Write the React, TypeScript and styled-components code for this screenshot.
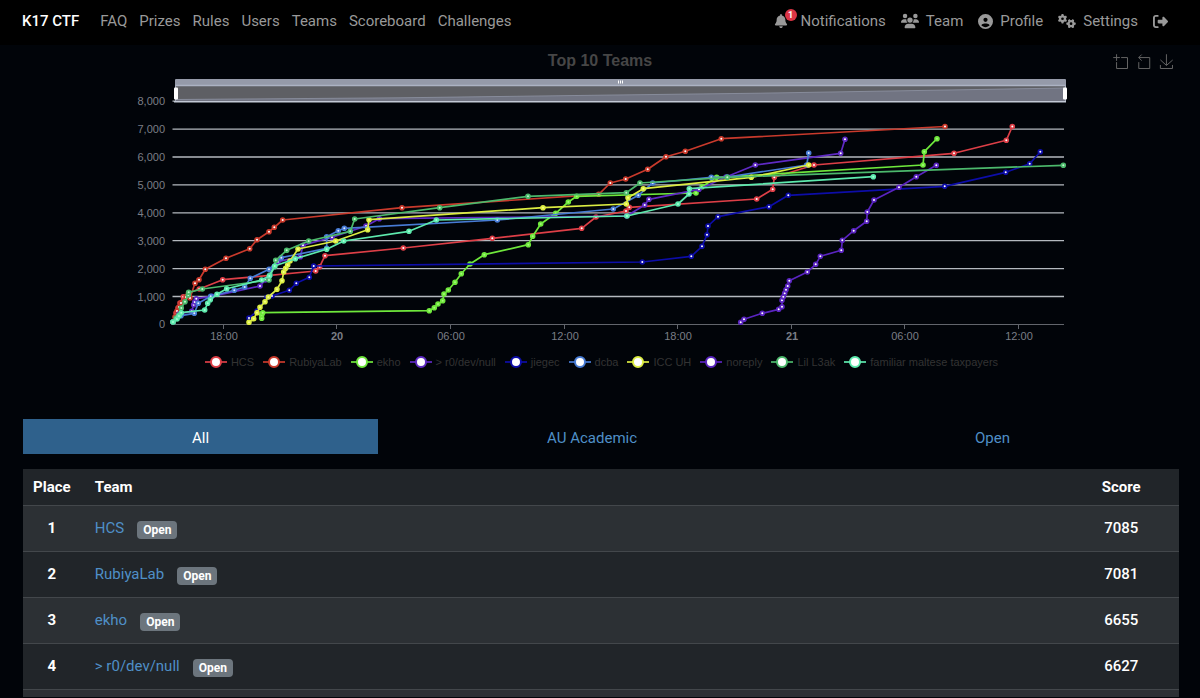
import React, { useState } from "react";
import styled, { createGlobalStyle } from "styled-components";
import { FaBell, FaCircleUser, FaGears, FaRightFromBracket, FaUsers } from "react-icons/fa6";

const GlobalStyle = createGlobalStyle`
  *, *::before, *::after { box-sizing: border-box; }
  html { scrollbar-width: none; background: #010409; }
  body {
    margin: 0;
    background: #010409;
    color: #fff;
    font-family: Roboto, "Liberation Sans", sans-serif;
    font-size: 15px;
    line-height: 20px;
  }
`;

const NavBar = styled.nav`
  display: flex;
  align-items: center;
  justify-content: space-between;
  height: 45px;
  padding: 0 32px 3px 22px;
  background: #000;
`;

const NavGroup = styled.div<{ $gap: number }>`
  display: flex;
  align-items: center;
  gap: ${(p) => p.$gap}px;
`;

const Brand = styled.a`
  margin-right: 9px;
  color: #fff;
  font-weight: 500;
  text-decoration: none;
`;

const NavLink = styled.a`
  display: flex;
  align-items: center;
  gap: 7px;
  color: #999;
  text-decoration: none;
`;

const BellWrap = styled.span`
  position: relative;
  display: flex;
  width: 20px;
`;

const BellCount = styled.span`
  position: absolute;
  top: -5px;
  right: -3px;
  width: 12px;
  height: 12px;
  border-radius: 6px;
  background: #dc3545;
  color: #fff;
  font-size: 9px;
  font-weight: 700;
  line-height: 12px;
  text-align: center;
`;

const ChartHeader = styled.header`
  display: grid;
  grid-template-columns: 1fr auto 1fr;
  align-items: center;
  height: 30px;
  padding: 2px 26px 0;
  font-family: "Liberation Sans", Arial, sans-serif;
`;

const ChartTitle = styled.h2`
  grid-column: 2;
  margin: 0;
  color: #464646;
  font-size: 16px;
  line-height: 20px;
`;

const Toolbox = styled.div`
  display: flex;
  justify-content: flex-end;
  gap: 8px;
`;

const ToolButton = styled.button`
  display: flex;
  padding: 0;
  border: 0;
  background: none;
  color: #666;
  cursor: pointer;
`;

const Plot = styled.svg`
  display: block;
  width: 100%;
  height: auto;
  font-family: "Liberation Sans", Arial, sans-serif;
  font-size: 11px;
`;

const Legend = styled.ul`
  display: flex;
  justify-content: center;
  gap: 9px;
  margin: 0;
  padding: 0 0 50px 3px;
  list-style: none;
  color: #333;
  font-family: "Liberation Sans", Arial, sans-serif;
  font-size: 11px;
  line-height: 14px;
`;

const LegendItem = styled.li`
  display: flex;
  align-items: center;
  gap: 4px;
  white-space: nowrap;
`;

const Board = styled.main`
  padding: 0 21px 0 23px;
`;

const Tabs = styled.div`
  display: flex;
  margin-bottom: 15px;
`;

const Tab = styled.button<{ $active: boolean }>`
  flex: 1 1 auto;
  height: 35px;
  padding: 2px 0 0;
  border: 0;
  background: ${(p) => (p.$active ? "#2f618c" : "transparent")};
  color: ${(p) => (p.$active ? "#fff" : "#4f8fc7")};
  font: inherit;
  cursor: pointer;
`;

const Table = styled.table`
  width: 100%;
  border-collapse: collapse;
  background: #212529;
`;

const HeadCell = styled.th<{ $team?: boolean; $width?: string }>`
  width: ${(p) => p.$width || "auto"};
  height: 36px;
  padding: ${(p) => (p.$team ? "0 0 0 14px" : "0")};
  border-bottom: 1px solid #43474b;
  font-weight: 700;
  text-align: ${(p) => (p.$team ? "left" : "center")};
`;

const Row = styled.tr`
  height: 46px;
  border-bottom: 1px solid #43474b;
  &:nth-child(odd) { background: #2c3034; }
`;

const EndRow = styled.tr`
  height: 8px;
  background: #2c3034;
`;

const Cell = styled.td<{ $team?: boolean; $strong?: boolean }>`
  padding: ${(p) => (p.$team ? "0 0 0 14px" : "0")};
  font-weight: ${(p) => (p.$strong ? 700 : 500)};
  text-align: center;
`;

const TeamEntry = styled.div`
  display: flex;
  align-items: center;
  gap: 13px;
`;

const TeamLink = styled.a`
  color: #4f8fc7;
  font-weight: 400;
  text-decoration: none;
`;

const Badge = styled.span`
  height: 18px;
  margin-top: 3px;
  padding: 0 6px;
  border-radius: 4px;
  background: #6c757d;
  font-size: 12px;
  font-weight: 700;
  line-height: 19px;
`;

type Series = { name: string; color: string; core: string; points: number[][] };

const parse = (text: string) => text.trim().split(/\s+/).map((p) => p.split(",").map(Number));

const series: Series[] = [
  { name: "HCS", color: "#dd3f47", core: "#fff", points: parse("173,322 176,313 178,308 180,303 183.3,296.7 188.5,293 199.3,289 222.7,279.7 315.7,271 319.7,266.7 325,255.7 403.3,248 492.3,238.3 581.7,228.3 596,217 626,211 629.3,207.3 756.7,199 772.7,189.3 774.3,177.3 814,165 954,153.3 1006.3,140.3 1012.3,126.5") },
  { name: "RubiyaLab", color: "#c93a2c", core: "#fff", points: parse("173,322 175,317 177,311 179,307 181,303 186,297 190,298 195,283.3 199,279.7 205.3,269.3 226,258.3 249.7,248.7 257,239.7 269,231.7 274.3,227.3 282.7,220 402,207.7 598.7,194.3 610.3,183 625.7,179 647.7,169.3 666,156.7 685.3,151.3 721.3,138.7 945,126.5") },
  { name: "ekho", color: "#6fe83c", core: "#a5f77b", points: parse("261.7,318.3 261.7,315 262.7,312.7 429.3,310.7 434.3,307.7 438,304 442.7,300.7 444,294 448.3,290 455,282.3 461.3,273.7 470,264 484.3,254.7 528.3,244.7 532.7,236.3 540.7,224 555.7,213.3 568.3,202 576.7,196.3 696,193 702,186.7 716.7,177.3 923,165 924.3,151.7 937,138.7") },
  { name: "> r0/dev/null", color: "#5f2ac4", core: "#fff", points: parse("173,322 179,314 191.7,311.3 193.7,304.7 194.7,302 196.3,298.7 212,296.3 260,286 265.3,280 270,275 274,267 278,261.7 300.3,256.7 303,245.3 332,237.3 366,226 379.3,218.7 626.7,216 644.7,205 649,199.3 699,189.3 726,177 755.3,165 840.7,153.3 845,139.3") },
  { name: "jiegec", color: "#0d0da8", core: "#fff", points: parse("249,318 257,311 267,297.3 272,296 289.3,290.3 296.3,283.3 309.3,277.3 313.7,266 642.3,262 691.3,256.3 702,246.3 707,234.7 708,226 718,216.7 769,206.7 788.3,195.3 944.7,186.3 1005.7,172.3 1029.7,163.7 1040.3,151.7") },
  { name: "dcba", color: "#477bd4", core: "#dce8ff", points: parse("173,322 177,318 181,315.7 194.3,313.3 198.3,303.3 210.7,296.3 234.3,290.3 244.7,287 250.3,278.3 269,269.3 281.3,257.7 326.7,248.3 326.7,236.7 338.3,230.7 344.3,228.3 497.3,220 613.3,209 638.3,195.3 652.7,183 711.3,177.3 727.3,177 806.7,165 808.7,153") },
  { name: "ICC UH", color: "#dced42", core: "#f3ff8c", points: parse("249,322.3 253.7,318.7 257,312.7 260,307.3 265,301.7 268.3,297 277,289.3 282,280.7 283.7,272 285.7,268.3 287.7,265 290,261 298,249 335.7,241 367.7,229.7 369,219.7 543,207.7 626.3,204 628,197.7 643.3,188.7 751.3,177.3 808.7,165") },
  { name: "noreply", color: "#5a24c0", core: "#fff", points: parse("740.7,322.3 744,319.3 762.3,313.3 778.7,309.3 782,306.7 782,300.3 783.3,296.7 784.7,293.3 786,289.7 787.7,286 789.3,280.7 807.3,272 815.7,264.3 820.3,256.3 841.3,250.3 842.3,240.3 853.7,230.7 866.7,221.3 867.3,212 874,200 899,187.3 916.3,176.7 936.3,165.3") },
  { name: "Lil L3ak", color: "#4cb96c", core: "#c4f5d0", points: parse("173,322 176,318 179,315 181.3,308 185,301.7 188.3,295 188.7,292.3 202.3,289 269,280 270,275 274.7,266.7 275.7,260.3 286.7,250.3 308.7,241 350.3,231.3 354.7,219 439.7,207.7 528,196.3 626.3,192.7 640,183 727.3,177.3 1063.3,165.3") },
  { name: "familiar maltese taxpayers", color: "#5eeaae", core: "#a5ffd6", points: parse("173,322 177,319 179,316 181.3,312.7 204.7,310 207.7,303.3 210.3,299.7 217,294.3 226.7,288.7 261.7,280 269.3,276 274.7,266 295.3,258.7 326.7,249.3 343.7,241 409,231.3 436.3,220 627,216 678,204 689,194 689.3,188.7 873.3,176.7") },
];

const scoreTicks = [8000, 7000, 6000, 5000, 4000, 3000, 2000, 1000];
const timeTicks = [
  { x: 224, label: "18:00" },
  { x: 337, label: "20", day: true },
  { x: 451, label: "06:00" },
  { x: 565, label: "12:00" },
  { x: 678, label: "18:00" },
  { x: 792, label: "21", day: true },
  { x: 905, label: "06:00" },
  { x: 1019, label: "12:00" },
];
const scoreY = (score: number) => 324.4 - score * 0.0279;

const tools = [
  { label: "Zoom", path: "M0,13.5h26.9 M13.5,26.9V0 M32.1,13.5H58V58H13.5 V32.1" },
  { label: "Zoom reset", path: "M22,1.4L9.9,13.5l12.3,12.3 M10.3,13.5H54.9v44.6 H10.3v-26" },
  { label: "Save as image", path: "M4.7,22.9L29.3,45.5L54.7,23.4M4.6,43.6L4.6,58L53.8,58L53.8,43.6M29.2,45.1L29.2,0" },
];

const ScoreChart = () => (
  <Plot viewBox="0 75 1200 280" role="img" aria-label="Scores of the top 10 teams over time">
    {scoreTicks.map((s) => (
      <g key={s}>
        <path d={`M172.5 ${scoreY(s)}H1064`} stroke="#b4b9bf" strokeWidth="1.3" />
        <text x="165" y={scoreY(s) + 4} textAnchor="end" fill="#7b7e86">{s.toLocaleString("en-US")}</text>
      </g>
    ))}
    <text x="165" y="328" textAnchor="end" fill="#7b7e86">0</text>
    <path d="M172.5 324.5H1064" stroke="#62656c" />
    {timeTicks.map((t) => (
      <g key={t.x}>
        <path d={`M${t.x - 0.5} 324v5`} stroke="#62656c" />
        <text x={t.x} y="340" textAnchor="middle" fill="#7b7e86" fontWeight={t.day ? 700 : 400}>{t.label}</text>
      </g>
    ))}

    <rect x="175" y="79" width="891" height="7" rx="1" fill="#959aa9" />
    <rect x="175" y="86" width="891" height="16" fill="#5e5f64" />
    <path d="M176 99.5 400 97.8 600 95.2 760 93.2 1065 88V101H176Z" fill="#717482" />
    <path d="M176 99.5 400 97.8 600 95.2 760 93.2 1065 88" fill="none" stroke="#8f94a5" strokeWidth="0.8" />
    <path d="M175 85.5H1066" stroke="#acb2c3" strokeWidth="1.4" />
    <path d="M175.5 85V102M1065.5 85V102" stroke="#a2a8b8" />
    <path d="M174 101.7H1066" stroke="#c3c9d6" strokeWidth="1.6" />
    <path d="M618.5 80.5v3M620.5 80.5v3M622.5 80.5v3" stroke="#fff" />
    <rect x="174" y="87.5" width="4" height="12" rx="1" fill="#fff" />
    <rect x="1063" y="87.5" width="4" height="12" rx="1" fill="#fff" />

    {series.map((s) => (
      <g key={s.name} stroke={s.color}>
        <polyline points={s.points.map((p) => p.join(",")).join(" ")} fill="none" strokeWidth="1.7" strokeLinejoin="bevel" />
        {s.points.map(([x, y], i) => (
          <circle key={i} cx={x} cy={y} r="1.9" fill={s.core} strokeWidth="1.8" />
        ))}
      </g>
    ))}
  </Plot>
);

const pages = ["FAQ", "Prizes", "Rules", "Users", "Teams", "Scoreboard", "Challenges"];
const brackets = ["All", "AU Academic", "Open"];
const standings = [
  { team: "HCS", score: 7085 },
  { team: "RubiyaLab", score: 7081 },
  { team: "ekho", score: 6655 },
  { team: "> r0/dev/null", score: 6627 },
];

export default function App() {
  const [bracket, setBracket] = useState("All");
  return (
    <>
      <GlobalStyle />
      <NavBar>
        <NavGroup $gap={12}>
          <Brand href="#">K17 CTF</Brand>
          {pages.map((p) => (
            <NavLink key={p} href="#">{p}</NavLink>
          ))}
        </NavGroup>
        <NavGroup $gap={15}>
          <NavLink href="#">
            <BellWrap>
              <FaBell size={14} />
              <BellCount>1</BellCount>
            </BellWrap>
            Notifications
          </NavLink>
          <NavLink href="#"><FaUsers size={18} />Team</NavLink>
          <NavLink href="#"><FaCircleUser size={15} />Profile</NavLink>
          <NavLink href="#"><FaGears size={18} />Settings</NavLink>
          <NavLink href="#" aria-label="Logout"><FaRightFromBracket size={15} /></NavLink>
        </NavGroup>
      </NavBar>

      <ChartHeader>
        <ChartTitle>Top 10 Teams</ChartTitle>
        <Toolbox>
          {tools.map((t) => (
            <ToolButton key={t.label} aria-label={t.label}>
              <svg width="15" height="15" viewBox="-1 -1 61 61" fill="none" stroke="currentColor" strokeWidth="4">
                <path d={t.path} />
              </svg>
            </ToolButton>
          ))}
        </Toolbox>
      </ChartHeader>
      <ScoreChart />
      <Legend>
        {series.map((s) => (
          <LegendItem key={s.name}>
            <svg width="22" height="14" viewBox="0 0 22 14">
              <path d="M0 7H22" stroke={s.color} strokeWidth="1.7" />
              <circle cx="11" cy="7" r="5" fill="#fff" stroke={s.color} strokeWidth="2" />
            </svg>
            {s.name}
          </LegendItem>
        ))}
      </Legend>

      <Board>
        <Tabs role="tablist">
          {brackets.map((b) => (
            <Tab key={b} role="tab" aria-selected={b === bracket} $active={b === bracket} onClick={() => setBracket(b)}>
              {b}
            </Tab>
          ))}
        </Tabs>
        <Table>
          <thead>
            <tr>
              <HeadCell $width="5%">Place</HeadCell>
              <HeadCell $team>Team</HeadCell>
              <HeadCell $width="10%">Score</HeadCell>
            </tr>
          </thead>
          <tbody>
            {standings.map((s, i) => (
              <Row key={s.team}>
                <Cell $strong>{i + 1}</Cell>
                <Cell $team>
                  <TeamEntry>
                    <TeamLink href="#">{s.team}</TeamLink>
                    <Badge>Open</Badge>
                  </TeamEntry>
                </Cell>
                <Cell>{s.score}</Cell>
              </Row>
            ))}
            <EndRow aria-hidden="true">
              <Cell as="td" colSpan={3} />
            </EndRow>
          </tbody>
        </Table>
      </Board>
    </>
  );
}
